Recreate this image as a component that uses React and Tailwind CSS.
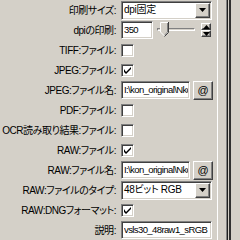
import React from "react";

const sunken =
  "border border-t-[#808080] border-l-[#808080] border-b-white border-r-white shadow-[inset_1px_1px_0_#404040,inset_-1px_-1px_0_#d4d0c8]";
const raised =
  "border border-t-white border-l-white border-b-[#404040] border-r-[#404040] shadow-[inset_-1px_-1px_0_#808080,inset_1px_1px_0_#d4d0c8]";

const Arrow = ({ up }) => (
  <svg width="7" height="4" viewBox="0 0 7 4">
    <path d={up ? "M3.5 0 L7 4 L0 4 Z" : "M0 0 L7 0 L3.5 4 Z"} fill="#000" />
  </svg>
);

const Check = ({ checked }) => (
  <div className={`w-[13px] h-[13px] bg-white ${sunken} flex items-center justify-center`}>
    {checked && (
      <svg width="7" height="7" viewBox="0 0 7 7">
        <path d="M0 2 L0 5 L2 7 L7 2 L7 0 L2 5 Z" fill="#000" />
      </svg>
    )}
  </div>
);

const Select = ({ value }) => (
  <div className={`w-[91px] h-[19px] bg-white ${sunken} flex items-center pl-[2px]`}>
    <span className="flex-1 leading-none tracking-[-0.3px]">{value}</span>
    <div className={`w-[15px] h-[15px] mr-[1px] bg-[#d4d0c8] ${raised} flex items-center justify-center`}>
      <Arrow />
    </div>
  </div>
);

const TextBox = ({ value, w }) => (
  <div className={`${w} h-[18px] bg-white ${sunken} flex items-center pl-[2px] pr-[1px]`}>
    <span className="block w-full leading-none overflow-hidden whitespace-nowrap text-[9.5px] tracking-[-0.6px]">
      {value}
    </span>
  </div>
);

const FileRow = ({ value }) => (
  <div className="flex items-center gap-[3px]">
    <TextBox value={value} w="w-[69px]" />
    <div className={`w-[20px] h-[19px] bg-[#d4d0c8] ${raised} flex items-center justify-center leading-none text-[11px]`}>@</div>
  </div>
);

const rows = [
  ["印刷サイズ:", <Select value="dpi固定" />],
  [
    "dpiの印刷:",
    <div className="flex items-center">
      <TextBox value="350" w="w-[32px]" />
      <div className="relative w-[38px] h-[18px] ml-[4px]">
        <div className="absolute left-0 right-0 top-[7px] h-[3px] border-t border-l border-t-[#808080] border-l-[#808080] border-b border-r border-b-white border-r-white"></div>
        <svg className="absolute left-[3px] top-[1px]" width="9" height="15" viewBox="0 0 9 15">
          <path d="M0.5 0.5 H8 V10 L4.5 14 L0.5 10 Z" fill="#d4d0c8" stroke="#fff" />
          <path d="M8.5 0 V10.5 L4.5 14.5" fill="none" stroke="#404040" />
          <path d="M7.5 1 V10 L4.5 13.3" fill="none" stroke="#808080" />
        </svg>
      </div>
      <div className="ml-[6px] flex flex-col">
        <div className={`w-[10px] h-[7px] bg-[#d4d0c8] ${raised} flex items-center justify-center`}>
          <Arrow up />
        </div>
        <div className={`w-[10px] h-[7px] bg-[#d4d0c8] ${raised} flex items-center justify-center`}>
          <Arrow />
        </div>
      </div>
    </div>,
  ],
  ["TIFF:ファイル:", <Check />],
  ["JPEG:ファイル:", <Check checked />],
  ["JPEG:ファイル名:", <FileRow value="I:\kon_original\Nkon" />],
  ["PDF:ファイル:", <Check />],
  ["OCR読み取り結果:ファイル:", <Check />],
  ["RAW:ファイル:", <Check checked />],
  ["RAW:ファイル名:", <FileRow value="I:\kon_original\Nkon" />],
  ["RAW:ファイルのタイプ:", <Select value="48ビット RGB" />],
  ["RAW:DNGフォーマット:", <Check checked />],
  ["説明:", <TextBox value="vsls30_48raw1_sRGB" w="w-[91px]" />],
];

export default function App() {
  return (
    <div
      className="w-[240px] h-[240px] bg-[#d4d0c8] flex overflow-hidden text-[10px] text-black [font-feature-settings:'palt']"
      style={{ fontFamily: '"Liberation Sans", "Noto Sans CJK JP", sans-serif' }}
    >
      <div className="w-[217px] flex flex-col">
        {rows.map(([label, control], i) => (
          <div key={i} className="h-[20px] flex items-center">
            <div className="w-[117px] text-right pr-[1px] whitespace-nowrap tracking-[-0.45px]">{label}</div>
            <div className="pl-[4px]">{control}</div>
          </div>
        ))}
      </div>
      <div className="w-[1px] bg-white"></div>
      <div className="w-[8px]"></div>
      <div className="w-[1px] bg-[#808080]"></div>
      <div className="w-[1px] bg-[#202020]"></div>
      <div className="w-[1px] bg-[#d4d0c8]"></div>
      <div className="w-[2px] bg-[#303030]"></div>
      <div className="flex-1"></div>
    </div>
  );
}
